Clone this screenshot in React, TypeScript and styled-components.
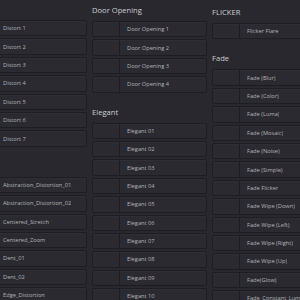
import React from "react";
import styled, { createGlobalStyle } from "styled-components";

const GlobalStyle = createGlobalStyle`
  html, body {
    margin: 0;
    padding: 0;
    background: #28282e;
  }
  body {
    font-family: "Open Sans", "Liberation Sans", sans-serif;
  }
`;

type Section = { title: string; items: string[] };

const leftColumn: Section[] = [
  {
    title: "",
    items: ["Distort 1", "Distort 2", "Distort 3", "Distort 4", "Distort 5", "Distort 6", "Distort 7"],
  },
  {
    title: "",
    items: [
      "Abstraction_Distortion_01",
      "Abstraction_Distortion_02",
      "Centered_Stretch",
      "Centered_Zoom",
      "Dent_01",
      "Dent_02",
      "Edge_Distortion",
    ],
  },
];

const middleColumn: Section[] = [
  {
    title: "Door Opening",
    items: ["Door Opening 1", "Door Opening 2", "Door Opening 3", "Door Opening 4"],
  },
  {
    title: "Elegant",
    items: [
      "Elegant 01",
      "Elegant 02",
      "Elegant 03",
      "Elegant 04",
      "Elegant 05",
      "Elegant 06",
      "Elegant 07",
      "Elegant 08",
      "Elegant 09",
      "Elegant 10",
    ],
  },
];

const rightColumn: Section[] = [
  { title: "FLICKER", items: ["Flicker Flare"] },
  {
    title: "Fade",
    items: [
      "Fade (Blur)",
      "Fade (Color)",
      "Fade (Luma)",
      "Fade (Mosaic)",
      "Fade (Noise)",
      "Fade (Simple)",
      "Fade Flicker",
      "Fade Wipe (Down)",
      "Fade Wipe (Left)",
      "Fade Wipe (Right)",
      "Fade Wipe (Up)",
      "Fade(Glow)",
      "Fade_Constant_Luma",
    ],
  },
];

const Column = ({
  sections,
  offset,
  width = 115,
}: {
  sections: Section[];
  offset: number;
  width?: number;
}) => (
  <ColumnWrap $offset={offset} $width={width}>
    {sections.map((s, i) => (
      <Group key={i}>
        <Header>{s.title}</Header>
        <List>
          {s.items.map((name) => (
            <Item key={name}>
              <Thumb />
              <Label>{name}</Label>
            </Item>
          ))}
        </List>
      </Group>
    ))}
  </ColumnWrap>
);

export default function App() {
  return (
    <>
      <GlobalStyle />
      <Viewport>
        <Columns>
          <Column sections={leftColumn} offset={-1} width={119} />
          <Column sections={middleColumn} offset={0} />
          <Column sections={rightColumn} offset={2} />
        </Columns>
      </Viewport>
    </>
  );
}

const Viewport = styled.div`
  width: 300px;
  height: 300px;
  overflow: hidden;
  background: #28282e;
`;

const Columns = styled.div`
  display: flex;
  gap: 5px;
  margin-left: -32px;
`;

const ColumnWrap = styled.div<{ $offset: number; $width: number }>`
  width: ${(p) => p.$width}px;
  flex: none;
  display: flex;
  flex-direction: column;
  gap: 9px;
  margin-top: ${(p) => p.$offset}px;
`;

const Group = styled.div`
  display: flex;
  flex-direction: column;
`;

const Header = styled.div`
  height: 21px;
  line-height: 20px;
  font-size: 7.6px;
  font-weight: 500;
  color: #cdcdd0;
  white-space: nowrap;
`;

const List = styled.div`
  display: flex;
  flex-direction: column;
  gap: 2px;
`;

const Item = styled.div`
  height: 16.4px;
  box-sizing: border-box;
  display: flex;
  align-items: center;
  border: 1px solid #1e1e22;
  border-radius: 2px;
  background: #2a2a30;
  box-shadow: inset 0 1px 0 rgba(255, 255, 255, 0.02);
`;

const Thumb = styled.div`
  width: 26px;
  height: 100%;
  flex: none;
  border-right: 1px solid #1e1e22;
`;

const Label = styled.span`
  padding-left: 7px;
  font-size: 5.7px;
  color: #b3b3b7;
  white-space: nowrap;
  overflow: hidden;
`;
